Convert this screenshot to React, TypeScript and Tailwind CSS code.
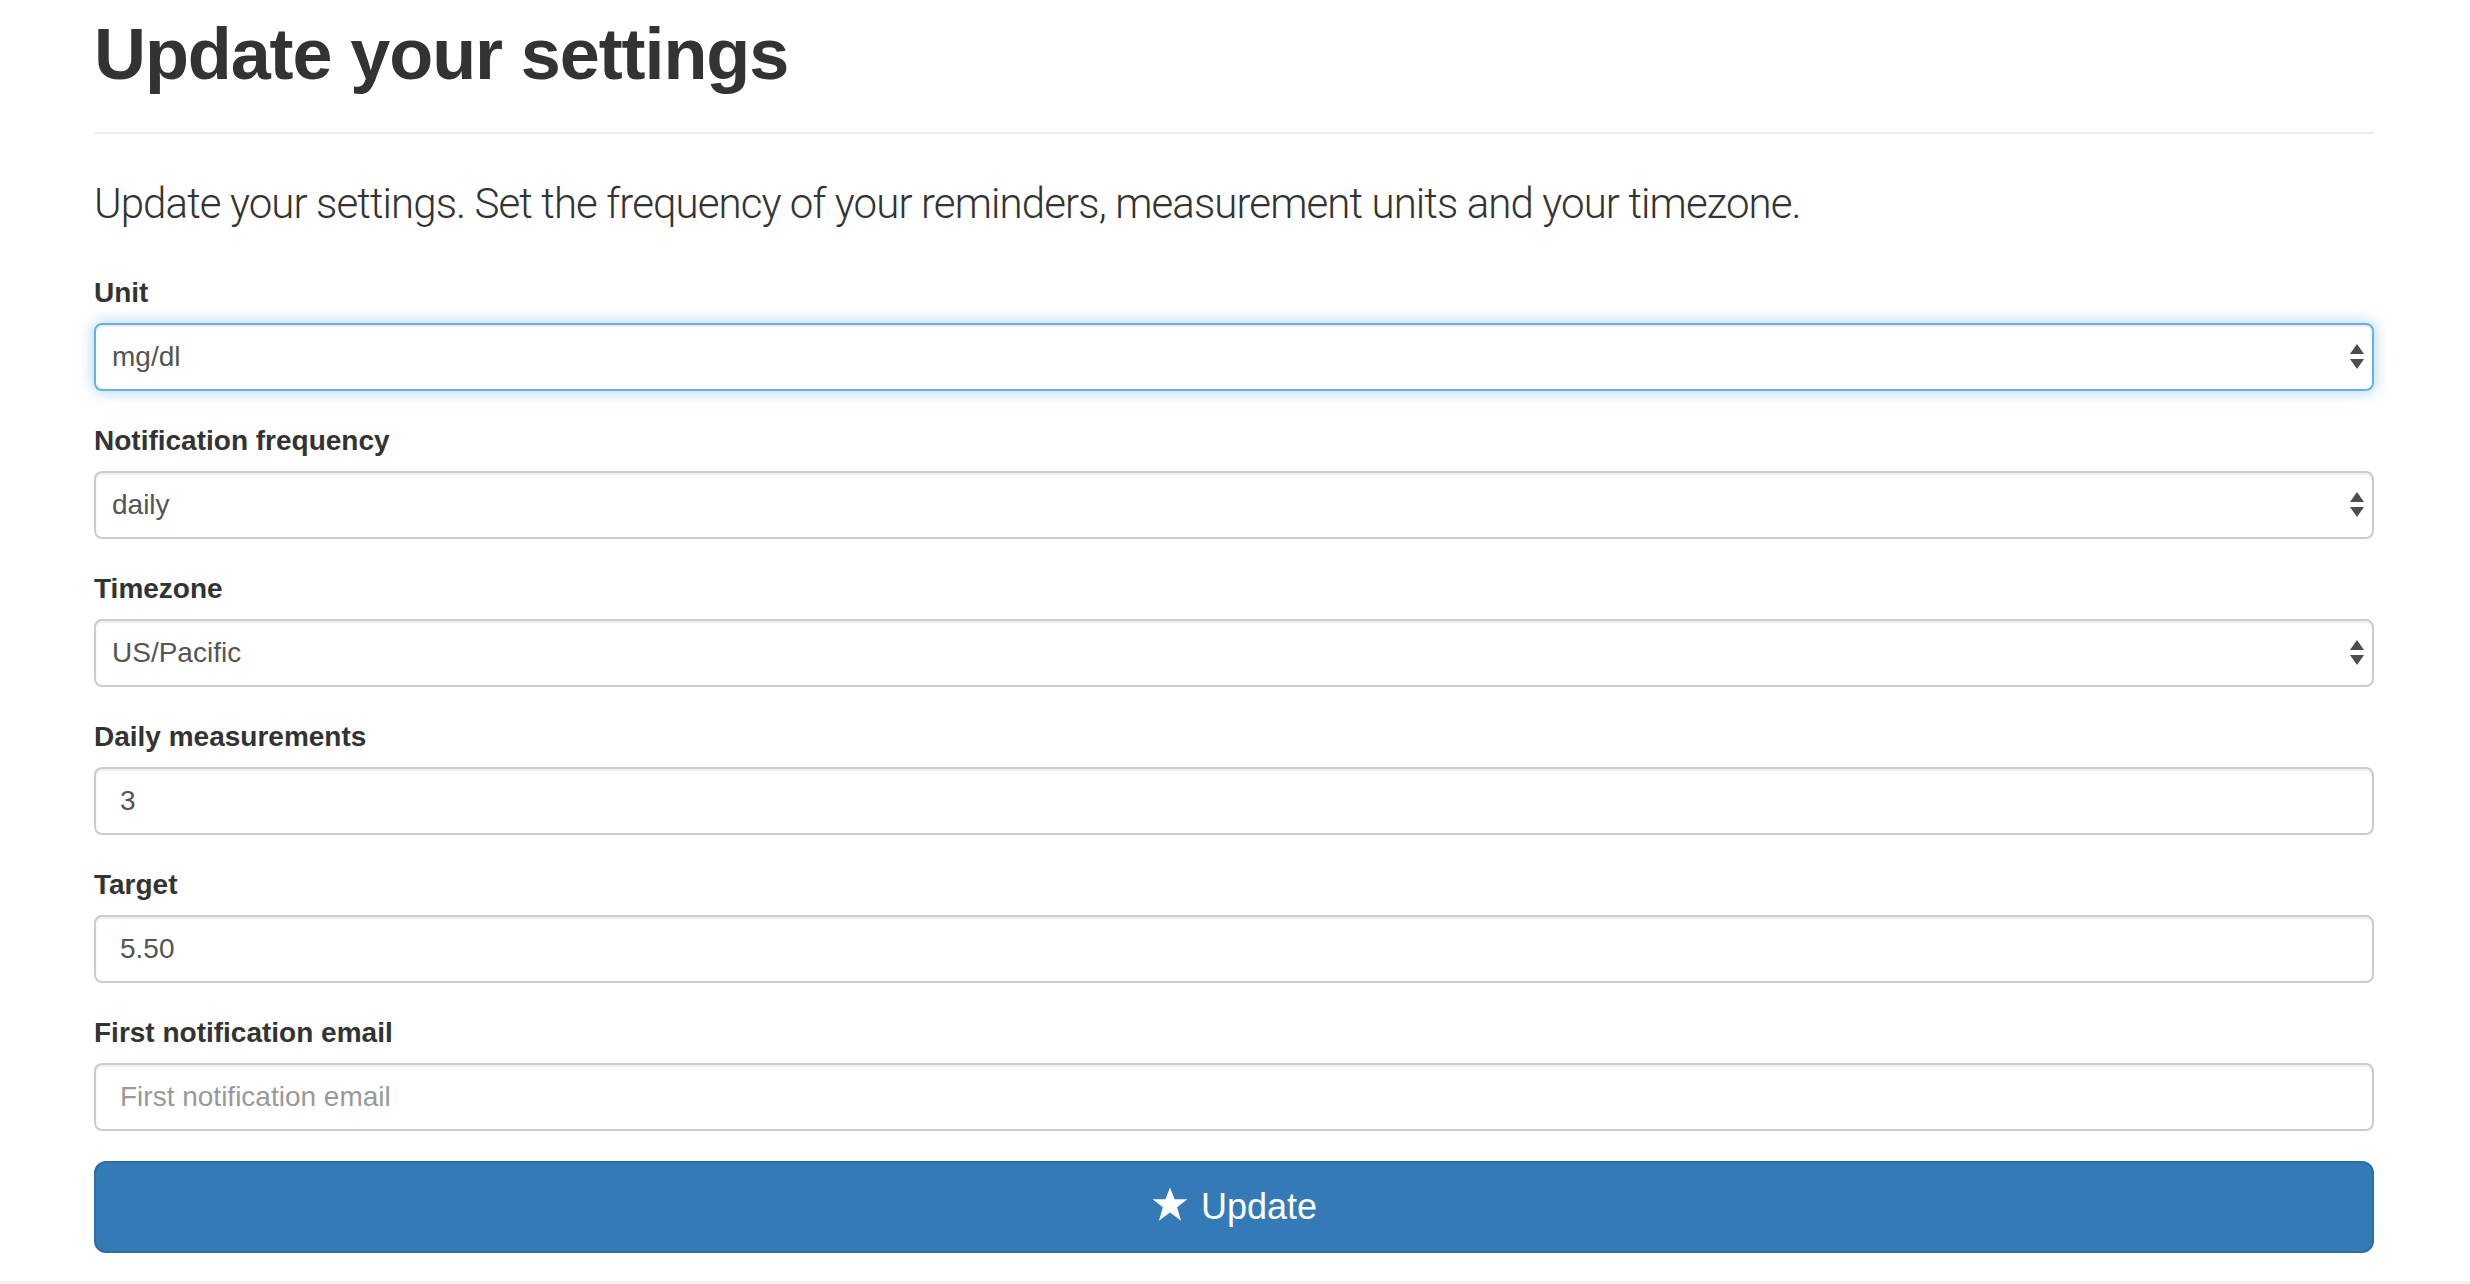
const font = { fontFamily: '"Liberation Sans", Arial, sans-serif' };

function Arrows() {
  return (
    <svg
      width="14"
      height="26"
      viewBox="0 0 14 26"
      className="pointer-events-none absolute right-[10px] top-1/2 -translate-y-1/2"
    >
      <polygon points="7,0 14,10 0,10" fill="#4d4d4d" />
      <polygon points="0,15 14,15 7,25" fill="#4d4d4d" />
    </svg>
  );
}

function SelectField({
  label,
  value,
  focused,
}: {
  label: string;
  value: string;
  focused?: boolean;
}) {
  return (
    <div className="mb-[30px]">
      <label className="mb-[10px] block text-[28px] font-bold leading-[40px] text-[#333]">
        {label}
      </label>
      <div className="relative">
        <select
          defaultValue={value}
          className={
            focused
              ? "block h-[68px] w-full appearance-none rounded-[8px] border-2 border-[#66afe9] bg-white pl-[16px] text-[28px] text-[#555] outline-none shadow-[inset_0_2px_2px_rgba(0,0,0,0.075),0_0_16px_rgba(102,175,233,0.6)]"
              : "block h-[68px] w-full appearance-none rounded-[8px] border-2 border-[#ccc] bg-white pl-[16px] text-[28px] text-[#555] outline-none shadow-[inset_0_2px_2px_rgba(0,0,0,0.075)]"
          }
          style={font}
        >
          <option>{value}</option>
        </select>
        <Arrows />
      </div>
    </div>
  );
}

function TextField({
  label,
  value,
  placeholder,
}: {
  label: string;
  value?: string;
  placeholder?: string;
}) {
  return (
    <div className="mb-[30px]">
      <label className="mb-[10px] block text-[28px] font-bold leading-[40px] text-[#333]">
        {label}
      </label>
      <input
        type="text"
        readOnly
        value={value ?? ""}
        placeholder={placeholder}
        className="block h-[68px] w-full rounded-[8px] border-2 border-[#ccc] bg-white px-[24px] text-[28px] text-[#555] outline-none placeholder:text-[#999] shadow-[inset_0_2px_2px_rgba(0,0,0,0.075)]"
        style={font}
      />
    </div>
  );
}

export default function App() {
  return (
    <div className="min-h-[1284px] bg-white" style={font}>
      <div className="ml-[94px] w-[2280px] pt-[15px]">
        <div className="mb-[40px] border-b-2 border-[#eee] pb-[18px]">
          <h1 className="mb-[20px] text-[72px] font-bold leading-[79px] tracking-[-1.1px] text-[#333]">
            Update your settings
          </h1>
        </div>

        <p
          className="mb-[40px] text-[42px] font-light leading-[59px] tracking-[-0.9px] text-[#333]"
          style={{ fontFamily: 'Roboto, "Liberation Sans", sans-serif' }}
        >
          Update your settings. Set the frequency of your reminders, measurement units and your timezone.
        </p>

        <form>
          <SelectField label="Unit" value="mg/dl" focused />
          <SelectField label="Notification frequency" value="daily" />
          <SelectField label="Timezone" value="US/Pacific" />
          <TextField label="Daily measurements" value="3" />
          <TextField label="Target" value="5.50" />
          <TextField label="First notification email" placeholder="First notification email" />

          <button
            type="button"
            className="flex h-[92px] w-full items-center justify-center gap-[12px] rounded-[12px] border-2 border-[#2e6da4] bg-[#337ab7] text-[36px] leading-[48px] text-white"
          >
            <svg width="38" height="38" viewBox="0 0 24 24" className="-mt-[6px]">
              <polygon
                points="12,1.5 14.9,9 23,9 16.5,14 19,22.5 12,17.3 5,22.5 7.5,14 1,9 9.1,9"
                fill="white"
              />
            </svg>
            <span>Update</span>
          </button>
        </form>
      </div>
      <div className="mt-[28px] h-[4px] w-full bg-[#f3f3f3]" />
    </div>
  );
}
